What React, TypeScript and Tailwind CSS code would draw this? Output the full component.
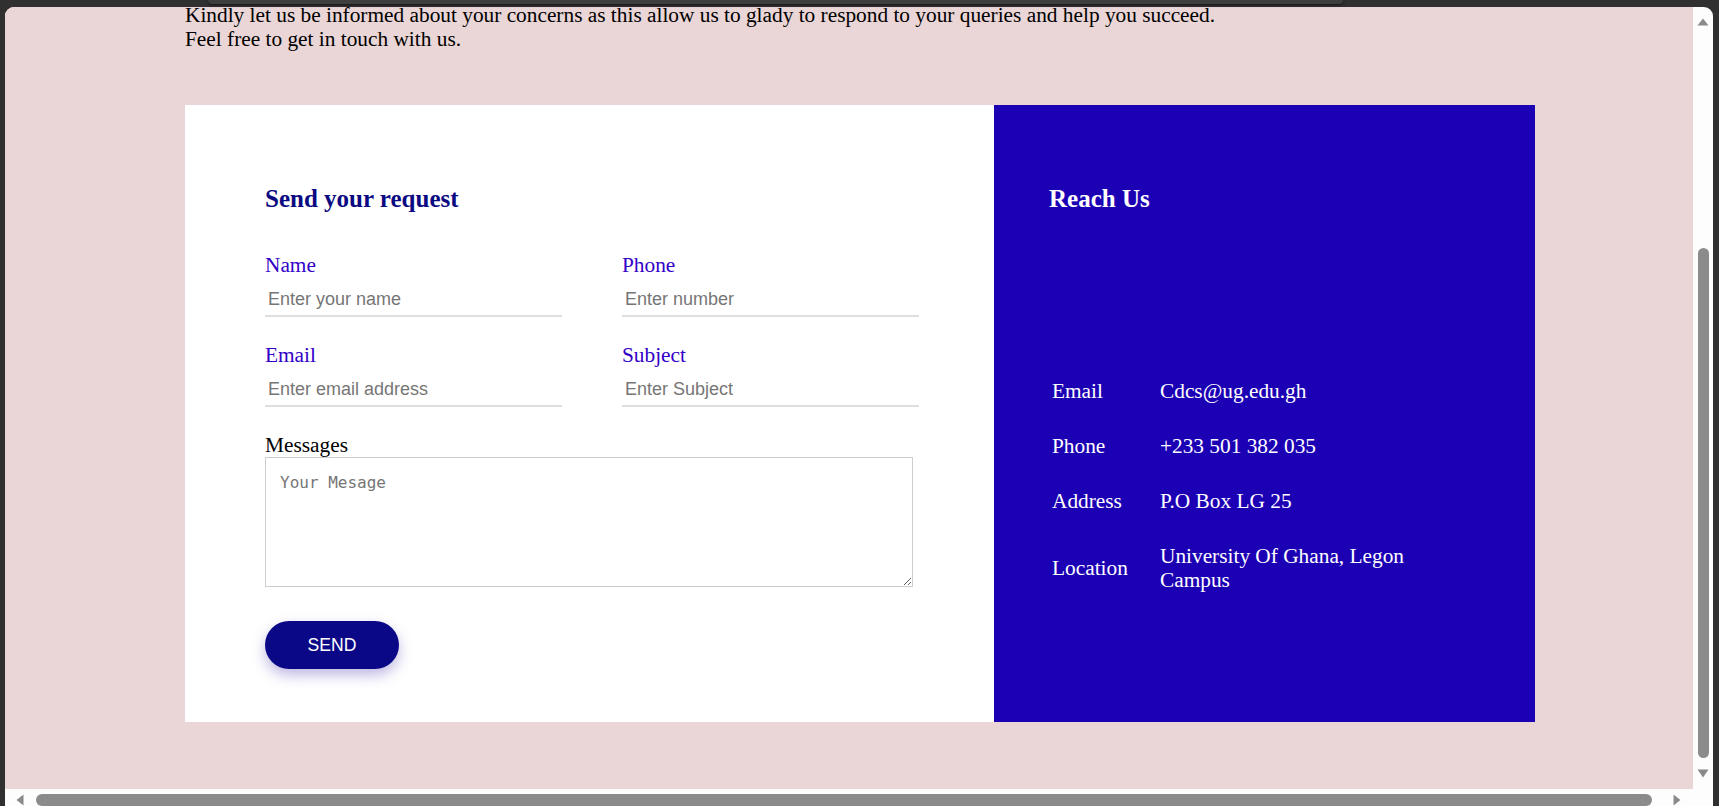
import React from "react";

function Field({ label, placeholder }: { label: string; placeholder: string }) {
  return (
    <div className="flex flex-col w-[297px]">
      <label className="text-[21.33px] leading-[24px] text-[#3300c8]">{label}</label>
      <input
        placeholder={placeholder}
        className="h-[40px] box-border font-['Liberation_Sans',Arial,sans-serif] text-[18px] leading-[20px] pt-[12px] pb-[6px] pl-[3px] pr-[2px] border-0 border-b-2 border-solid border-[#dedede] outline-none bg-transparent text-black placeholder:text-[#767676]"
      />
    </div>
  );
}

function Row({ label, children }: { label: string; children: React.ReactNode }) {
  return (
    <>
      <div className="py-[15.5px] flex items-center">{label}</div>
      <div className="py-[15.5px] flex items-center">{children}</div>
    </>
  );
}

export default function App() {
  return (
    <div className="relative w-[1719px] h-[806px] overflow-hidden bg-[#303030] pl-[5px] pt-[7px]">
      <div className="absolute left-[208px] top-0 w-[1135px] h-[4px] bg-[#3e3e3e] rounded-b-[5px] shadow-[0_1px_3px_rgba(0,0,0,0.6)]" />
      <div className="w-[1708px] h-[802px] rounded-t-[9px] overflow-hidden bg-[#fdfdfd] flex flex-col">
        <div className="flex h-[782px]">
          {/* page */}
          <div className="w-[1688px] h-[782px] bg-[#ead6d6] overflow-hidden font-['Liberation_Serif','Times_New_Roman',serif] text-black">
            <div className="pl-[180px]">
              <p className="-mt-[4px] text-[21.33px] leading-[24px]">
                Kindly let us be informed about your concerns as this allow us to glady to respond to your queries and help you succeed.
                <br />
                Feel free to get in touch with us.
              </p>
              <div className="mt-[54px] w-[1350px] h-[617px] flex">
                {/* form */}
                <div className="w-[809px] bg-white pl-[80px] pt-[80px]">
                  <h3 className="text-[25px] leading-[28px] font-bold text-[#0b0a82]">Send your request</h3>
                  <div className="mt-[40px] flex gap-[60px]">
                    <Field label="Name" placeholder="Enter your name" />
                    <Field label="Phone" placeholder="Enter number" />
                  </div>
                  <div className="mt-[26px] flex gap-[60px]">
                    <Field label="Email" placeholder="Enter email address" />
                    <Field label="Subject" placeholder="Enter Subject" />
                  </div>
                  <div className="mt-[26px] text-[21.33px] leading-[24px]">Messages</div>
                  <textarea
                    placeholder="Your Mesage"
                    className="block w-[648px] h-[130px] box-border border border-solid border-[#cdcdcd] bg-white pt-[15px] px-[14px] font-['DejaVu_Sans_Mono',monospace] text-[16px] leading-[19px] outline-none placeholder:text-[#767676]"
                  />
                  <button className="mt-[34px] w-[134px] h-[48px] rounded-full bg-[#0b0888] text-white font-['Liberation_Sans',Arial,sans-serif] text-[17.6px] shadow-[0_6px_14px_rgba(70,50,170,0.35)]">
                    SEND
                  </button>
                </div>
                {/* reach us */}
                <div className="w-[541px] bg-[#1c00b4] text-white pl-[55px] pt-[80px]">
                  <h3 className="text-[25px] leading-[28px] font-bold">Reach Us</h3>
                  <div className="mt-[150px] ml-[3px] grid grid-cols-[108px_270px] text-[21.33px] leading-[24px]">
                    <Row label="Email">Cdcs@ug.edu.gh</Row>
                    <Row label="Phone">+233 501 382 035</Row>
                    <Row label="Address">P.O Box LG 25</Row>
                    <Row label="Location">University Of Ghana, Legon Campus</Row>
                  </div>
                </div>
              </div>
            </div>
          </div>
          {/* vertical scrollbar */}
          <div className="w-[20px] h-[782px] flex flex-col items-center">
            <svg width="12" height="8" viewBox="0 0 12 8" className="mt-[11px]">
              <polygon points="6,0.5 11.5,7.5 0.5,7.5" fill="#8a8a8a" />
            </svg>
            <div className="mt-[222px] w-[11px] h-[510px] rounded-full bg-[#8b8b8b] ml-[1px]" />
            <svg width="12" height="9" viewBox="0 0 12 9" className="mt-[11px]">
              <polygon points="0.5,0.5 11.5,0.5 6,8.5" fill="#8a8a8a" />
            </svg>
          </div>
        </div>
        {/* horizontal scrollbar */}
        <div className="h-[20px] flex items-start pt-[5px]">
          <svg width="8" height="12" viewBox="0 0 8 12" className="ml-[11px]">
            <polygon points="0.5,6 7.5,0.5 7.5,11.5" fill="#8a8a8a" />
          </svg>
          <div className="ml-[12px] w-[1616px] h-[12px] rounded-full bg-[#8b8b8b]" />
          <svg width="8" height="12" viewBox="0 0 8 12" className="ml-[21px]">
            <polygon points="0.5,0.5 7.5,6 0.5,11.5" fill="#8a8a8a" />
          </svg>
        </div>
      </div>
    </div>
  );
}
